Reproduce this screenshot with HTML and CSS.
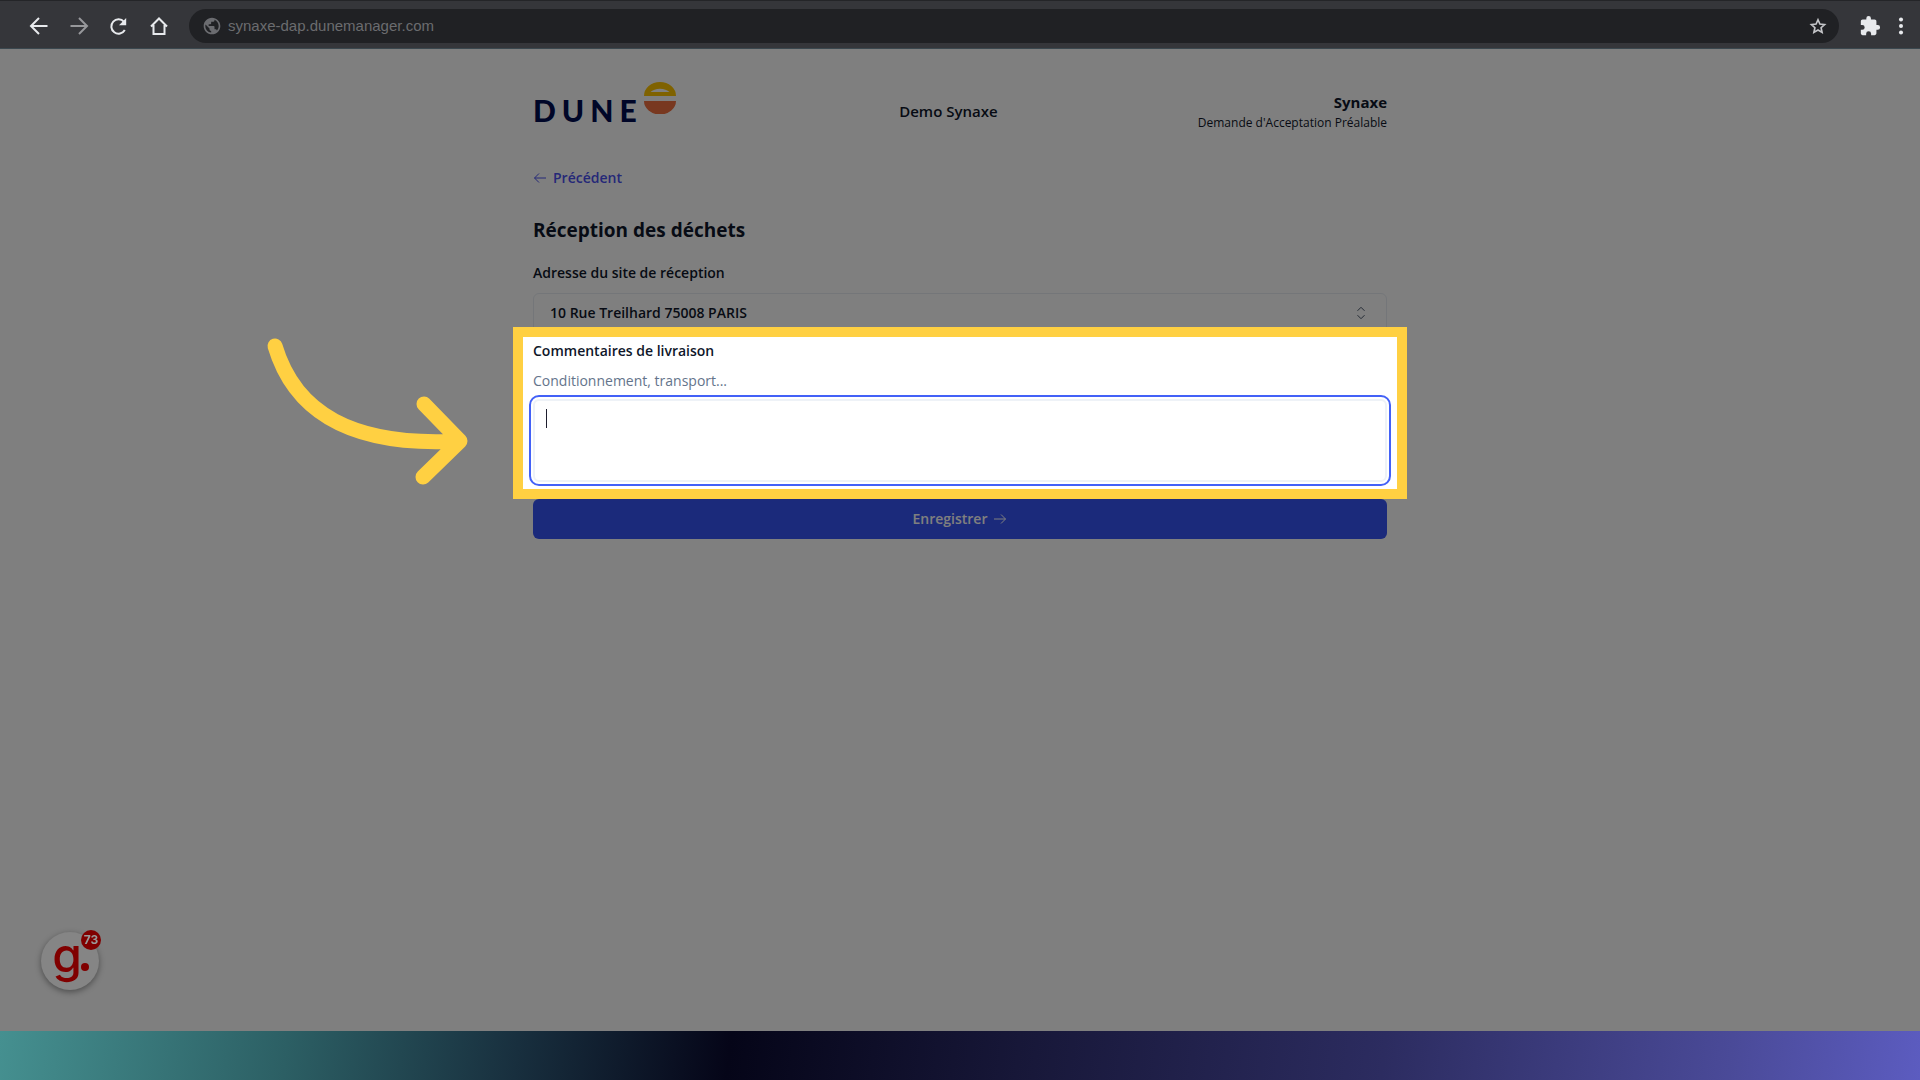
FILE: index.html
```html
<!DOCTYPE html>
<html lang="fr">
<head>
  <meta charset="UTF-8">
  <meta name="viewport" content="width=device-width, initial-scale=1.0">
  <title>Réception des déchets</title>
  <link rel="stylesheet" href="styles.css">
</head>
<body>
<nav class="toolbar">
  <div class="nav-buttons">
    <button type="button" aria-label="Retour">
      <svg viewBox="0 0 24 24"><path d="M20.5 12H4M12 4l-8 8 8 8"/></svg>
    </button>
    <button type="button" class="muted" aria-label="Avancer">
      <svg viewBox="0 0 24 24"><path d="M3.500 12H20M12 4l8 8-8 8"/></svg>
    </button>
    <button type="button" aria-label="Actualiser">
      <svg viewBox="0 0 24 24"><path d="M17.800 16A7.200 7.200 0 1 1 17 7.800"/><path class="solid" d="M19.200 4v7.200H12z"/></svg>
    </button>
    <button type="button" aria-label="Accueil">
      <svg viewBox="0 0 24 24"><path d="M4 12.500l8-8 8 8M6.500 11v9h11v-9"/></svg>
    </button>
  </div>
  <div class="address">
    <svg class="globe" viewBox="0 0 24 24"><path d="M12 2C6.480 2 2 6.480 2 12s4.480 10 10 10 10-4.480 10-10S17.520 2 12 2zm-1 17.930c-3.950-.49-7-3.850-7-7.930 0-.62.080-1.210.210-1.790L9 15v1c0 1.100.9 2 2 2v1.930zm6.900-2.540c-.26-.81-1-1.390-1.900-1.390h-1v-3c0-.55-.45-1-1-1H8v-2h2c.55 0 1-.45 1-1V7h2c1.100 0 2-.9 2-2v-.41c2.930 1.190 5 4.060 5 7.410 0 2.080-.8 3.970-2.100 5.390z"/></svg>
    <input type="text" aria-label="Adresse" value="synaxe-dap.dunemanager.com">
    <button type="button" aria-label="Ajouter aux favoris">
      <svg viewBox="0 0 24 24"><path d="M12 4.500l2.300 5.200 5.600.6-4.200 3.800 1.200 5.600-4.900-2.900-4.900 2.900 1.200-5.600-4.200-3.800 5.600-.6z"/></svg>
    </button>
  </div>
  <div class="menu-buttons">
    <button type="button" aria-label="Extensions">
      <svg viewBox="0 0 24 24"><path class="solid" d="M20.500 11H19V7c0-1.100-.9-2-2-2h-4V3.500a2.500 2.500 0 0 0-5 0V5H4c-1.100 0-2 .9-2 2v3.800h1.500a2.700 2.700 0 0 1 0 5.400H2V20c0 1.100.9 2 2 2h3.800v-1.500a2.700 2.700 0 0 1 5.400 0V22H17c1.100 0 2-.9 2-2v-4h1.500a2.500 2.500 0 0 0 0-5z"/></svg>
    </button>
    <button type="button" aria-label="Menu">
      <svg viewBox="0 0 24 24"><circle class="solid" cx="12" cy="5" r="2.200"/><circle class="solid" cx="12" cy="12" r="2.200"/><circle class="solid" cx="12" cy="19" r="2.200"/></svg>
    </button>
  </div>
</nav>

<main>
  <div class="container">
    <header>
      <div class="logo">
        <span>DUNE</span>
        <svg viewBox="0 0 32 32">
          <path fill="#ffc400" fill-rule="evenodd" d="M0 14a16 14 0 0 1 32 0zM6.500 10h19a11 6.500 0 0 0-19 0z"/>
          <path fill="#f07040" d="M0 19h32a16 13.500 0 0 1-32 0z"/>
        </svg>
      </div>
      <p class="client">Demo Synaxe</p>
      <div class="company">
        <strong>Synaxe</strong>
        <small>Demande d'Acceptation Préalable</small>
      </div>
    </header>

    <a class="back" href="#">
      <svg viewBox="0 0 14 14"><path d="M13 7H1.500M6 2.500L1.500 7 6 11.500"/></svg>
      Précédent
    </a>

    <form>
      <h1>Réception des déchets</h1>
      <label for="site">Adresse du site de réception</label>
      <div class="select">
        <select id="site">
          <option>10 Rue Treilhard 75008 PARIS</option>
        </select>
        <svg viewBox="0 0 14 14"><path d="M3.500 4.800L7 1.300l3.500 3.500M3.500 9.200L7 12.700l3.500-3.500"/></svg>
      </div>

      <div class="comments">
        <label for="comments">Commentaires de livraison</label>
        <p class="hint" id="hint">Conditionnement, transport...</p>
        <textarea id="comments" aria-describedby="hint"></textarea>
        <span class="caret"></span>
        <div class="spotlight"></div>
        <svg class="pointer" viewBox="0 0 240 180"><path d="M25 26C45 93 102 127 209 121M174 84l36 37-37 36"/></svg>
      </div>

      <button class="submit" type="submit">
        Enregistrer
        <svg viewBox="0 0 14 14"><path d="M1 7h11.500M8 2.500L12.500 7 8 11.500"/></svg>
      </button>
    </form>
  </div>
</main>

<button class="guide" type="button">g<span class="count">73</span></button>
<footer></footer>
</body>
</html>
```
FILE: styles.css
```css
* {
  box-sizing: border-box;
}
body {
  margin: 0;
  min-height: 100vh;
  display: flex;
  flex-direction: column;
  font-family: "Open Sans", "Noto Sans", sans-serif;
  font-size: 14px;
  line-height: 20px;
  color: #0f172a;
}
h1, p {
  margin: 0;
}
svg {
  display: block;
  fill: none;
  stroke: currentColor;
}
button, input, select, textarea {
  font: inherit;
  color: inherit;
}

/* browser bar */
.toolbar {
  display: flex;
  align-items: center;
  height: 49px;
  padding: 3px 7px 0 27px;
  background: #35363a;
  border-top: 1px solid #242528;
  border-bottom: 1px solid #3b484f;
  color: #e8eaed;
}
.toolbar button {
  width: 24px;
  height: 24px;
  padding: 0;
  border: none;
  background: none;
}
.toolbar svg {
  width: 24px;
  height: 24px;
  stroke-width: 2;
}
.toolbar .solid {
  fill: currentColor;
  stroke: none;
}
.toolbar .muted {
  color: #97989b;
}
.nav-buttons {
  display: flex;
  gap: 16px;
}
.address {
  flex: 1;
  display: flex;
  align-items: center;
  gap: 6px;
  height: 34px;
  margin: 0 19px 0 18px;
  padding: 0 9px 0 13px;
  border-radius: 17px;
  background: #202124;
}
.address input {
  flex: 1;
  padding: 0;
  border: none;
  outline: none;
  background: none;
  font-family: "Liberation Sans", sans-serif;
  font-size: 15px;
  color: #6b6c6f;
}
.address button,
.menu-buttons button {
  display: flex;
  align-items: center;
  justify-content: center;
}
.address button svg {
  width: 20px;
  height: 20px;
  color: #c4c5c8;
}
.address .globe {
  width: 20px;
  height: 20px;
  fill: #6b6c70;
  stroke: none;
}
.menu-buttons {
  display: flex;
  gap: 7px;
}
.menu-buttons svg {
  width: 22px;
  height: 22px;
}

main {
  flex: 1;
  overflow: hidden;
  background: #fff;
}
.container {
  max-width: 854px;
  margin: 0 auto;
  padding-top: 24px;
}
header {
  display: flex;
  align-items: center;
  justify-content: space-between;
  height: 76px;
}
.logo {
  display: flex;
  align-items: center;
  width: 166px;
  padding-bottom: 2px;
  font-family: Lato, sans-serif;
  font-size: 30px;
  font-weight: 900;
  line-height: 74px;
  letter-spacing: 6px;
  color: #000c50;
}
.logo svg {
  width: 32px;
  height: 32px;
  margin: 0 0 24px 1px;
  stroke: none;
}
.client,
.company strong {
  font-size: 15px;
  font-weight: 600;
  line-height: 24px;
}
.company {
  text-align: right;
}
.company strong {
  display: block;
  font-weight: 700;
}
.company small {
  display: block;
  font-size: 12px;
  line-height: 18px;
}
.back {
  display: inline-flex;
  align-items: center;
  gap: 6px;
  margin-top: 19px;
  font-weight: 600;
  color: #4a50f0;
  text-decoration: none;
}
.back svg {
  width: 14px;
  height: 14px;
}
h1 {
  margin: 26px 0 19px;
  font-size: 19px;
  font-weight: 700;
  line-height: 28px;
}
label {
  display: block;
  font-weight: 600;
}
.select {
  position: relative;
  margin: 10px 0 8px;
}
.select select {
  appearance: none;
  display: block;
  width: 100%;
  height: 40px;
  padding: 0 16px;
  border: 1px solid #e9edf3;
  border-radius: 6px;
  background: #fff;
  font-weight: 600;
}
.select svg {
  position: absolute;
  top: 13px;
  right: 19px;
  width: 14px;
  height: 14px;
  color: #475569;
}
.comments {
  position: relative;
}
.hint {
  margin: 10px 0 8px;
  color: #64748b;
}
.comments textarea {
  display: block;
  width: 100%;
  height: 83px;
  padding: 8px 12px;
  border: 2px solid #eef2f7;
  border-radius: 6px;
  outline: 2px solid #4361f7;
  outline-offset: 2px;
  resize: none;
}
.caret {
  position: absolute;
  top: 68px;
  left: 13px;
  width: 1px;
  height: 19px;
  background: #1e1e2e;
}
/* dims everything in main except the comment field */
.spotlight {
  position: absolute;
  inset: -14px -20px -17px;
  z-index: 1;
  border: 10px solid #ffd042;
  box-shadow: 0 0 0 4000px rgba(0, 0, 0, 0.5);
  pointer-events: none;
}
.pointer {
  position: absolute;
  top: -21px;
  left: -283px;
  z-index: 2;
  width: 240px;
  height: 180px;
  color: #ffd042;
  stroke-width: 15;
  stroke-linecap: round;
  stroke-linejoin: round;
}
.submit {
  display: flex;
  align-items: center;
  justify-content: center;
  gap: 6px;
  width: 100%;
  height: 40px;
  margin-top: 17px;
  border: none;
  border-radius: 6px;
  background: #3654f6;
  color: #fff;
  font-weight: 600;
}
.submit svg {
  width: 14px;
  height: 14px;
}

/* floating help launcher */
.guide {
  position: fixed;
  left: 41px;
  bottom: 90px;
  z-index: 3;
  width: 58px;
  height: 58px;
  padding: 0 6px 12px 0;
  border: none;
  border-radius: 50%;
  background: #858585;
  box-shadow: 0 2px 6px rgba(0, 0, 0, 0.4);
  font-family: Inter, sans-serif;
  font-size: 48px;
  font-weight: 500;
  line-height: 44px;
  color: #800000;
}
.guide::after {
  content: "";
  position: absolute;
  right: 10px;
  bottom: 19px;
  width: 8px;
  height: 8px;
  border-radius: 50%;
  background: #800000;
}
.count {
  position: absolute;
  top: -2px;
  right: -2px;
  width: 20px;
  height: 20px;
  border-radius: 50%;
  background: #800000;
  font-size: 12px;
  font-weight: 700;
  line-height: 20px;
  color: #999;
}
footer {
  height: 49px;
  background: linear-gradient(97deg, #459090 0%, #2c5f64 15%, #182f3e 27%, #050518 38%, #171738 53%, #2c2c60 72%, #4a4a98 90%, #5c5cc0 100%);
}
```
